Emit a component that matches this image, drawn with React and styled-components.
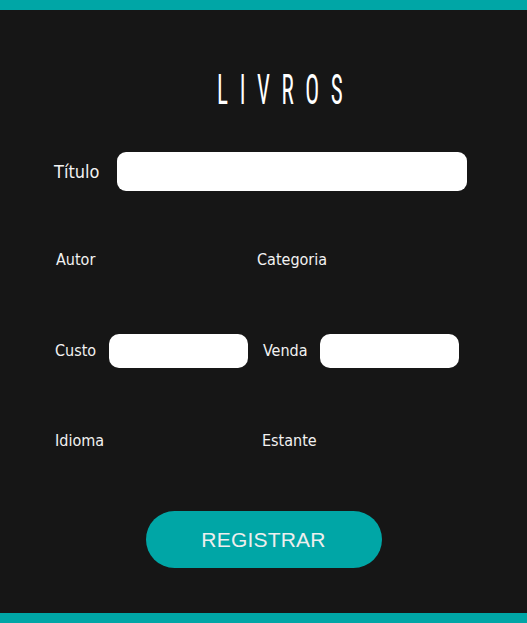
import React from "react";
import styled, { createGlobalStyle } from "styled-components";

const teal = "#00a6a6";

const Global = createGlobalStyle`
  html, body { margin: 0; padding: 0; background: #161616; }
  * { box-sizing: border-box; }
`;

const Page = styled.div`
  height: 623px;
  background: #161616;
  border-top: 10px solid ${teal};
  border-bottom: 10px solid ${teal};
  display: flex;
  flex-direction: column;
  font-family: "DejaVu Sans Condensed", "DejaVu Sans", sans-serif;
  font-stretch: semi-condensed;
  color: #f2f2f2;
`;

const Title = styled.h1`
  margin: 59px 0 0 0;
  padding-left: 44px;
  height: 42px;
  display: flex;
  justify-content: center;
  font-family: Roboto, "Liberation Sans", sans-serif;
  font-weight: 400;
  font-size: 42px;
  line-height: 42px;
  color: #ffffff;
  -webkit-font-smoothing: antialiased;
`;

const TitleText = styled.span`
  display: inline-block;
  transform: scaleX(0.55);
  transform-origin: center;
  letter-spacing: 21px;
`;

const Row = styled.div`
  margin-top: ${(p) => p.$top}px;
  padding-left: ${(p) => p.$left ?? 55}px;
  display: grid;
  grid-template-columns: ${(p) => p.$col}px auto;
  align-items: center;
`;

const WideRow = styled.div`
  margin-top: 41px;
  padding-left: 54px;
  display: flex;
  align-items: center;
`;

const Field = styled.div`
  display: flex;
  align-items: center;
  gap: ${(p) => p.$gap ?? 13}px;
`;

const Label = styled.label`
  font-size: ${(p) => p.$size ?? 16}px;
  line-height: 20px;
  white-space: nowrap;
`;

const TitleLabel = styled(Label)`
  width: 63px;
`;

const Input = styled.input`
  border: none;
  outline: none;
  background: #ffffff;
  width: ${(p) => p.$w}px;
  height: ${(p) => p.$h}px;
  border-radius: ${(p) => p.$r}px;
  padding: 0 10px;
  font-size: 16px;
`;

const Button = styled.button`
  margin: 60px auto 0;
  width: 236px;
  height: 57px;
  border: none;
  border-radius: 29px;
  background: ${teal};
  color: #eeeeee;
  font-family: "Liberation Sans", Arial, sans-serif;
  font-size: 21px;
  letter-spacing: 0.2px;
  cursor: pointer;
`;

export default function App() {
  return (
    <>
      <Global />
      <Page>
        <Title>
          <TitleText>LIVROS</TitleText>
        </Title>
        <WideRow>
          <TitleLabel $size={18}>Título</TitleLabel>
          <Input $w={350} $h={39} $r={9} />
        </WideRow>
        <Row $top={59} $col={201} $left={56}>
          <Field>
            <Label>Autor</Label>
          </Field>
          <Field>
            <Label>Categoria</Label>
          </Field>
        </Row>
        <Row $top={64} $col={208}>
          <Field $gap={13}>
            <Label>Custo</Label>
            <Input $w={139} $h={34} $r={10} />
          </Field>
          <Field $gap={12}>
            <Label>Venda</Label>
            <Input $w={139} $h={34} $r={10} />
          </Field>
        </Row>
        <Row $top={63} $col={207}>
          <Field>
            <Label>Idioma</Label>
          </Field>
          <Field>
            <Label>Estante</Label>
          </Field>
        </Row>
        <Button>REGISTRAR</Button>
      </Page>
    </>
  );
}
